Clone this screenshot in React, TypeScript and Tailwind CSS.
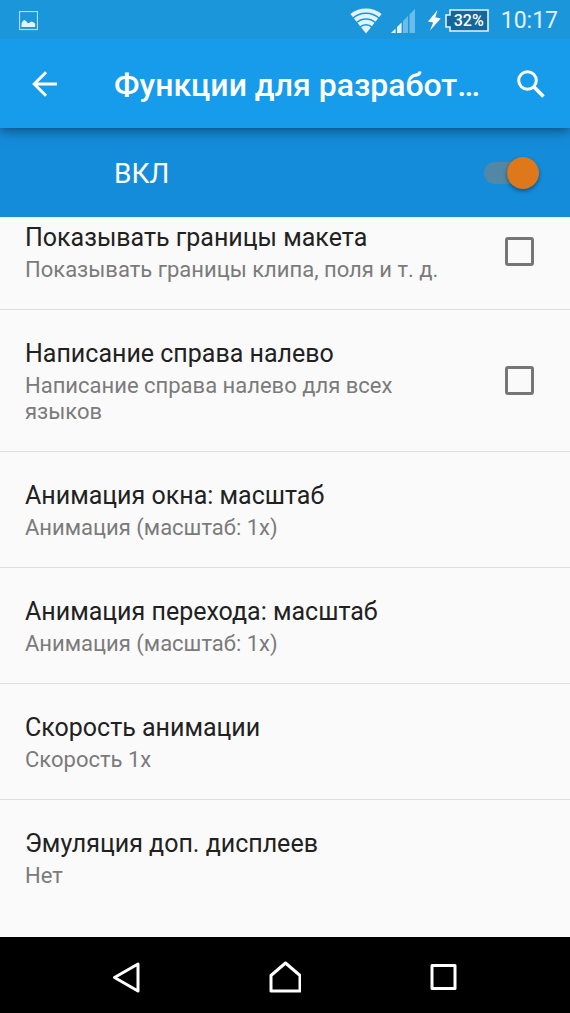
import { useState } from 'react';

type Setting = {
  id: string;
  title: string;
  summary: string;
  checkable?: boolean;
};

const settings: Setting[] = [
  {
    id: 'layout-bounds',
    title: 'Показывать границы макета',
    summary: 'Показывать границы клипа, поля и т. д.',
    checkable: true,
  },
  {
    id: 'force-rtl',
    title: 'Написание справа налево',
    summary: 'Написание справа налево для всех языков',
    checkable: true,
  },
  { id: 'window-scale', title: 'Анимация окна: масштаб', summary: 'Анимация (масштаб: 1x)' },
  { id: 'transition-scale', title: 'Анимация перехода: масштаб', summary: 'Анимация (масштаб: 1x)' },
  { id: 'animator-speed', title: 'Скорость анимации', summary: 'Скорость 1x' },
  { id: 'displays', title: 'Эмуляция доп. дисплеев', summary: 'Нет' },
];

const StatusBar = () => (
  <div className="relative z-20 flex h-[39px] items-center bg-[#1b96db] pt-0.5 pl-[19px] pr-3 text-[#e3f3fd]">
    <svg width="19" height="20" viewBox="0 0 19 20" className="mr-auto" aria-hidden="true">
      <rect x="0.5" y="0.5" width="18" height="18" fill="none" stroke="#b5dcf6" strokeWidth="1.2" />
      <path d="M2.5 16v-3.700l1-1.800 1.600-1.400 1.700.6 1.300 1.800 1.600.7 1.400-.9 1.600-.7 1.800.6 1.600 1.600v3.200z" fill="#e3f3fd" />
    </svg>

    <svg width="32" height="26" viewBox="0 0 32 26" aria-hidden="true">
      <clipPath id="wifi-fan">
        <path d="M16 25.5 0 5.5V0h32v5.500z" />
      </clipPath>
      <g clipPath="url(#wifi-fan)" fill="none" stroke="currentColor" strokeWidth="4.2">
        <circle cx="16" cy="25" r="22.5" />
        <circle cx="16" cy="25" r="16.8" />
        <circle cx="16" cy="25" r="11.2" />
        <circle cx="16" cy="25" r="3.8" strokeWidth="7.6" />
      </g>
    </svg>

    <svg width="24" height="24" viewBox="0 0 24 24" className="ml-[9px]" aria-hidden="true">
      <path d="M0 24l4.6-4.6V24z" fill="currentColor" />
      <path d="M6 18l4.6-4.6V24H6z" fill="currentColor" />
      <path d="M12 12l5-5v17h-5z" fill="#6bbbeb" />
      <path d="M18.5 5.5L24 0v24h-5.500z" fill="#6bbbeb" />
    </svg>

    <svg width="13" height="21" viewBox="0 0 13 21" className="ml-[13px]" aria-hidden="true">
      <path d="M9.500 0 0 11.500l5.200 1L2 20.500 12.700 8.500l-5.400-1.200z" fill="#fff" />
    </svg>

    <div className="relative ml-1 flex h-[23px] w-[44px] items-center justify-center">
      <svg viewBox="0 0 44 23" className="absolute inset-0 size-full" aria-hidden="true">
        <path d="M5 1h38v21H5v-4H1V6h4z" fill="#14679a" stroke="currentColor" strokeWidth="1.6" />
      </svg>
      <span className="relative pl-1 text-base leading-5 font-medium text-white">32%</span>
    </div>

    <span className="ml-3 text-[23px] leading-8">10:17</span>
  </div>
);

const AppBar = () => (
  <header className="relative z-10 flex h-[89px] items-center bg-[#169ceb] pr-[25px] pl-8 text-white shadow-[0_2px_12px_rgba(0,0,0,0.5)]">
    <button type="button" aria-label="Назад">
      <svg width="26" height="26" viewBox="0 0 26 26" fill="none" stroke="currentColor" strokeWidth="3" className="block">
        <path d="M25 13H2.500M14 1.200 2.200 13 14 24.800" />
      </svg>
    </button>
    <h1 className="ml-14 min-w-0 flex-1 pt-0.5 text-[32px] leading-10 font-medium whitespace-nowrap">
      Функции для разработ…
    </h1>
    <button type="button" aria-label="Поиск" className="ml-4">
      <svg width="28" height="28" viewBox="0 0 28 28" fill="none" stroke="currentColor" className="block">
        <circle cx="10.500" cy="10.500" r="8.800" strokeWidth="3" />
        <path d="M17 17l9.500 9.500" strokeWidth="3.600" />
      </svg>
    </button>
  </header>
);

const MasterSwitch = () => {
  const [enabled, setEnabled] = useState(true);

  return (
    <label className="flex h-[89px] items-center justify-between bg-[#158cda] pr-[31px] pl-[114px] text-white">
      <span className="pt-0.5 text-[28px] leading-9">{enabled ? 'ВКЛ' : 'ВЫКЛ'}</span>
      <span className="relative flex h-8 w-[55px] items-center">
        <input
          type="checkbox"
          role="switch"
          checked={enabled}
          onChange={(e) => setEnabled(e.target.checked)}
          className="peer h-[22px] w-full appearance-none rounded-full bg-[#4a7fa3] checked:bg-[#5288a5]"
        />
        <span className="absolute top-0 left-0 size-8 rounded-full bg-gray-200 shadow-[0_2px_4px_rgba(0,0,0,0.4)] peer-checked:right-0 peer-checked:left-auto peer-checked:bg-[#de781b]" />
      </span>
    </label>
  );
};

const SettingText = ({ title, summary }: { title: string; summary: string }) => (
  <span className="block max-w-[430px] min-w-0">
    <span className="block text-[25px] leading-[30px] text-[#212121]">{title}</span>
    <span className="mt-1 block text-[22px] leading-[26px] text-[#7b7b7b]">{summary}</span>
  </span>
);

const SettingRow = ({ id, title, summary, checkable }: Setting) => {
  const [checked, setChecked] = useState(false);

  if (!checkable) {
    return (
      <button type="button" className="block w-full px-[25px] pt-[29px] pb-[26px] text-left">
        <SettingText title={title} summary={summary} />
      </button>
    );
  }

  return (
    <label htmlFor={id} className="flex items-center justify-between gap-16 pt-[29px] pr-9 pb-[26px] pl-[25px]">
      <SettingText title={title} summary={summary} />
      <input
        id={id}
        type="checkbox"
        checked={checked}
        onChange={(e) => setChecked(e.target.checked)}
        className="mb-1 size-[29px] shrink-0 appearance-none rounded-[3px] border-3 border-[#767676] checked:bg-[#de781b]"
      />
    </label>
  );
};

const NavigationBar = () => (
  <nav className="flex h-[76px] items-center justify-between bg-black px-[111px] pt-1 text-white">
    <button type="button" aria-label="Назад">
      <svg width="30" height="32" viewBox="0 0 30 32" fill="none" stroke="currentColor" strokeWidth="3" strokeLinejoin="round" className="block">
        <path d="M27 3v27L3.500 16.500z" />
      </svg>
    </button>
    <button type="button" aria-label="Домой">
      <svg width="32" height="32" viewBox="0 0 32 32" fill="none" stroke="currentColor" strokeWidth="3" strokeLinejoin="round" className="block">
        <path d="M2 14.500 16.500 2 31 14.500V30H2z" />
      </svg>
    </button>
    <button type="button" aria-label="Недавние">
      <svg width="30" height="32" viewBox="0 0 30 32" fill="none" stroke="currentColor" strokeWidth="3" strokeLinejoin="round" className="block">
        <rect x="3" y="4.500" width="23" height="23" />
      </svg>
    </button>
  </nav>
);

const App = () => {
  return (
    <div className="flex min-h-screen flex-col bg-[#fafafa] font-[Roboto,'Noto_Sans',sans-serif]">
      <StatusBar />
      <AppBar />
      <MasterSwitch />
      <main className="flex-1 overflow-hidden">
        {/* list is scrolled a little, so the first row starts under the switch bar */}
        <ul className="-mt-[23px] divide-y divide-[#dedede]">
          {settings.map((setting) => (
            <li key={setting.id}>
              <SettingRow {...setting} />
            </li>
          ))}
        </ul>
      </main>
      <NavigationBar />
    </div>
  );
};

export default App;
